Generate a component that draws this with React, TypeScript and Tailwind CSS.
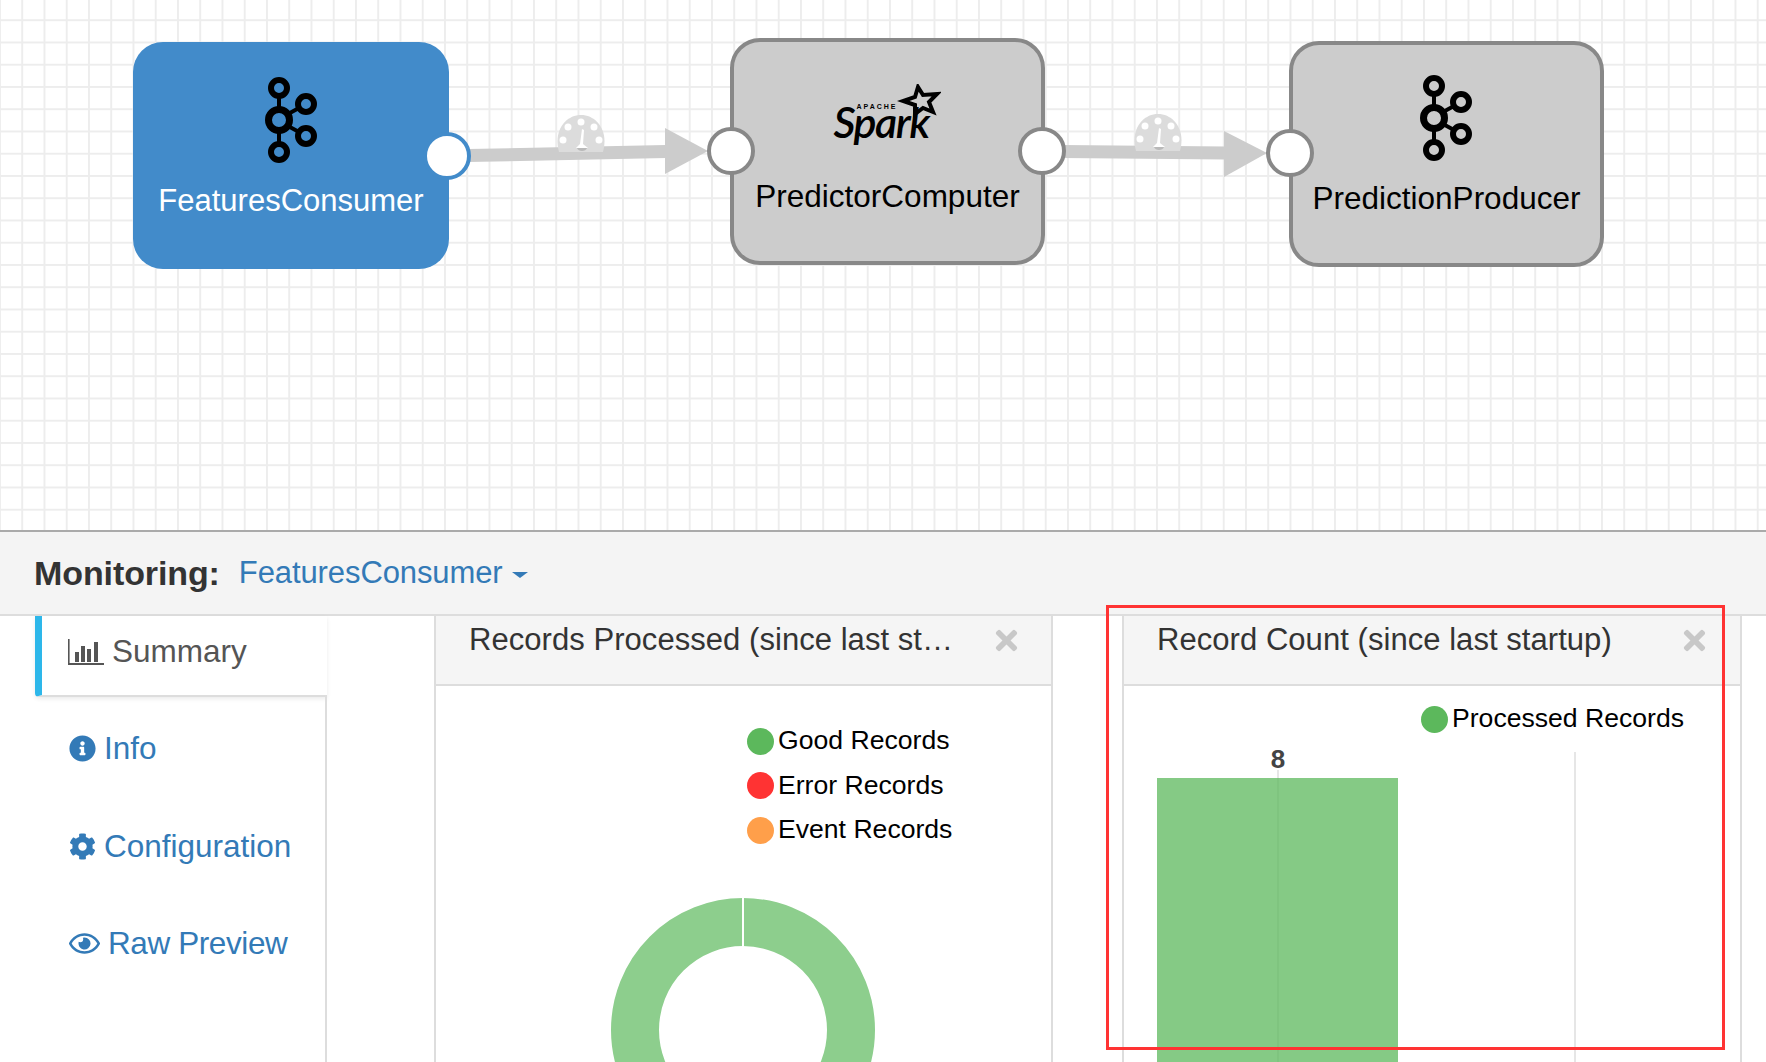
import { FaCog, FaInfoCircle, FaRegEye, FaTimes } from "react-icons/fa";

const KafkaIcon = () => (
  <svg width="52" height="86" viewBox="0 0 52 86" fill="none" stroke="#000">
    <circle cx="14" cy="11" r="8" strokeWidth="6" />
    <circle cx="14" cy="43" r="10.5" strokeWidth="7" />
    <circle cx="14" cy="75" r="8" strokeWidth="6" />
    <circle cx="41" cy="27" r="8" strokeWidth="6" />
    <circle cx="41" cy="59" r="8" strokeWidth="6" />
    <path d="M14 19V33M14 53V67M23 37L34 31M23 49L34 55" strokeWidth="4" />
  </svg>
);

const SparkLogo = () => (
  <div className="relative w-[108px] h-[56px] mr-[2px]">
    <span className="absolute left-[24px] top-[19px] text-[7px] leading-none tracking-[2px] font-bold text-black font-['Liberation_Sans',sans-serif]">
      APACHE
    </span>
    <span className="absolute left-[1px] top-[16px] text-[43px] leading-none font-semibold italic tracking-[-1.5px] text-black font-['Lato','Liberation_Sans',sans-serif]">
      Spark
    </span>
    <svg className="absolute left-[64px] top-0" width="44" height="34" viewBox="0 0 44 34" fill="none">
      <path d="M21 3L26 11L40 10L32 18L36 28L26 24L18 30L18 21L6 17L18 13Z" stroke="#000" strokeWidth="4" strokeLinejoin="miter" />
    </svg>
  </div>
);

const Gauge = ({ className }: { className: string }) => (
  <svg className={className} width="50" height="38" viewBox="0 0 50 38">
    <path d="M3 37C-3 15 10 0 25 0C40 0 53 15 47 37Z" fill="#dcdcdc" />
    <g fill="#fff">
      <circle cx="25" cy="7" r="3.5" />
      <circle cx="12" cy="12" r="3.5" />
      <circle cx="38" cy="12" r="3.5" />
      <circle cx="7" cy="25" r="3.5" />
      <circle cx="43" cy="25" r="3.5" />
    </g>
    <path d="M26 14L28 15L27 29L32 33H20L24 29Z" fill="#fff" />
    <path d="M21 33H31C30 37 22 37 21 33Z" fill="#b9b9b9" />
  </svg>
);

const ChartBarIcon = () => (
  <svg width="36" height="26" viewBox="0 0 36 26" fill="#555">
    <path d="M0 0H1.6V24H36V26H0Z" />
    <rect x="7" y="13" width="4" height="10" />
    <rect x="13" y="7" width="4" height="16" />
    <rect x="19" y="10" width="4" height="13" />
    <rect x="26" y="3" width="4" height="20" />
  </svg>
);

const LegendRow = ({ color, label }: { color: string; label: string }) => (
  <div className="flex items-center h-[44.5px]">
    <span className={`w-[27px] h-[27px] rounded-full ${color}`} />
    <span className="ml-[4px] text-[26.6px] text-black">{label}</span>
  </div>
);

const PanelHeader = ({ title }: { title: string }) => (
  <div className="flex items-start h-[70px] pl-[33px] bg-[#f5f5f5] border-b-2 border-[#ddd]">
    <div className="w-[490px] truncate text-[31px] leading-[46px] pt-[1px] text-[#333] tracking-[0.05px]">{title}</div>
    <FaTimes className="ml-[32px] mt-[9px] text-[#c8c8c8]" size={31} />
  </div>
);

const SideLink = ({ icon, label, gap }: { icon: React.ReactNode; label: string; gap: string }) => (
  <div className="flex items-center h-[97.5px] pl-[34px] text-[#337ab7] text-[31.5px]">
    {icon}
    <span className={gap}>{label}</span>
  </div>
);

export default function App() {
  return (
    <div className="relative w-[1766px] h-[1062px] overflow-hidden flex flex-col bg-white font-['Liberation_Sans',sans-serif]">
      {/* flow canvas */}
      <div className="relative h-[530px] shrink-0 bg-[linear-gradient(to_right,#ededed_2px,transparent_2px),linear-gradient(to_bottom,#ededed_2px,transparent_2px)] bg-[size:22.25px_22.25px] bg-[position:-1px_-3px]">
        <svg className="absolute left-0 top-0" width="1766" height="530" fill="none" stroke="#ccc" strokeWidth="13">
          <path d="M468 155.5L666 151.5" />
          <path d="M1062 151.5L1226 153" />
          <g stroke="none" fill="#ccc">
            <polygon points="665,128 708,151 665,174" />
            <polygon points="1224,131 1267,153 1224,177" />
          </g>
        </svg>
        <Gauge className="absolute left-[556px] top-[115px]" />
        <Gauge className="absolute left-[1133px] top-[114px]" />

        <div className="absolute left-[133px] top-[42px] w-[316px] h-[227px] rounded-[30px] bg-[#428bca] flex flex-col items-center pt-[35px]">
          <KafkaIcon />
          <div className="mt-[18px] text-[31px] leading-[40px] text-white">FeaturesConsumer</div>
        </div>
        <div className="absolute left-[730px] top-[38px] w-[315px] h-[227px] rounded-[30px] bg-[#ccc] border-4 border-[#888] flex flex-col items-center pt-[42px]">
          <SparkLogo />
          <div className="mt-[36px] text-[31.5px] leading-[40px] text-black">PredictorComputer</div>
        </div>
        <div className="absolute left-[1289px] top-[41px] w-[315px] h-[226px] rounded-[30px] bg-[#ccc] border-4 border-[#888] flex flex-col items-center pt-[30px]">
          <div className="mr-[2px]"><KafkaIcon /></div>
          <div className="mt-[17px] text-[31.5px] leading-[40px] text-black">PredictionProducer</div>
        </div>

        <span className="absolute left-[423px] top-[132px] w-[48px] h-[48px] rounded-full bg-white border-4 border-[#428bca]" />
        <span className="absolute left-[707px] top-[127px] w-[48px] h-[48px] rounded-full bg-white border-4 border-[#888]" />
        <span className="absolute left-[1018px] top-[127px] w-[48px] h-[48px] rounded-full bg-white border-4 border-[#888]" />
        <span className="absolute left-[1266px] top-[129px] w-[48px] h-[48px] rounded-full bg-white border-4 border-[#888]" />
      </div>

      {/* monitoring header */}
      <div className="h-[86px] shrink-0 flex items-center pl-[34px] bg-[#f4f4f4] border-t-2 border-b-2 border-t-[#aaa] border-b-[#ddd]">
        <span className="text-[34px] font-bold text-[#333] tracking-[-0.1px]">Monitoring:</span>
        <span className="ml-[19px] mt-[1px] text-[31px] text-[#337ab7] tracking-[-0.1px]">FeaturesConsumer</span>
        <span className="ml-[9px] mt-[4px] w-0 h-0 border-x-[8px] border-x-transparent border-t-[6px] border-t-[#337ab7]" />
      </div>

      <div className="flex flex-1 min-h-0">
        {/* side tabs */}
        <div className="w-[434px] shrink-0 pl-[35px]">
          <div className="w-[292px] h-[81px] flex items-center pl-[26px] pb-[8px] border-l-[7px] border-l-[#2db7ea] border-b-2 border-b-[#ddd] rounded-bl-[4px] shadow-[0_2px_4px_rgba(0,0,0,0.08)] text-[31.5px] text-[#555]">
            <ChartBarIcon />
            <span className="ml-[8px]">Summary</span>
          </div>
          <div className="w-[292px] h-[400px] border-r-2 border-[#ddd] pt-[3px]">
            <SideLink icon={<FaInfoCircle size={27} />} label="Info" gap="ml-[8px]" />
            <SideLink icon={<FaCog size={27} />} label="Configuration" gap="ml-[8px]" />
            <SideLink icon={<FaRegEye size={31} />} label="Raw Preview" gap="ml-[8px] tracking-[-0.4px]" />
          </div>
        </div>

        {/* records processed */}
        <div className="w-[619px] shrink-0 border-x-2 border-[#ddd] overflow-hidden">
          <PanelHeader title="Records Processed (since last startup)" />
          <div className="pl-[311px] pt-[33px]">
            <LegendRow color="bg-[#5cb85c]" label="Good Records" />
            <LegendRow color="bg-[#f33]" label="Error Records" />
            <LegendRow color="bg-[#ff9f4a]" label="Event Records" />
          </div>
          <svg className="ml-[175px] mt-[45px]" width="264" height="264" viewBox="0 0 264 264" fill="none">
            <circle cx="132" cy="132" r="108" stroke="#8dce8d" strokeWidth="48" />
            <path d="M132 0V48" stroke="#fff" strokeWidth="2" />
          </svg>
        </div>

        <div className="w-[69px] shrink-0" />

        {/* record count */}
        <div className="w-[620px] shrink-0 border-x-2 border-[#ddd] overflow-hidden">
          <PanelHeader title="Record Count (since last startup)" />
          <div className="pl-[297px] pt-[11px] h-[54px]">
            <LegendRow color="bg-[#5cb85c]" label="Processed Records" />
          </div>
          <svg width="616" height="322" viewBox="0 0 616 322">
            <path d="M154 30V322M451 12V322" stroke="#e6e6e6" strokeWidth="2" />
            <rect x="33" y="38" width="241" height="284" fill="#5cb85c" opacity="0.75" />
            <text x="154" y="28" textAnchor="middle" fontSize="26" fontWeight="700" fill="#444">8</text>
          </svg>
        </div>
      </div>

      {/* highlight drawn on top of the screenshot */}
      <div className="absolute left-[1106px] top-[605px] w-[619px] h-[445px] border-[3px] border-[#f33]" />
    </div>
  );
}
